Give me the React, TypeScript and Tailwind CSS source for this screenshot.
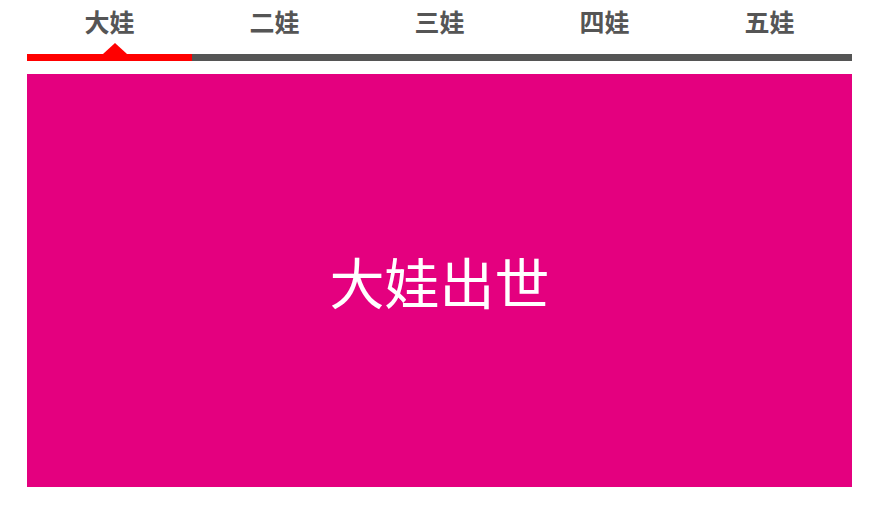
import React, { useState } from 'react';

const tabs = [
  { name: '大娃', text: '大娃出世', color: 'bg-[#e4007f]' },
  { name: '二娃', text: '二娃出世', color: 'bg-[#e4007f]' },
  { name: '三娃', text: '三娃出世', color: 'bg-[#e4007f]' },
  { name: '四娃', text: '四娃出世', color: 'bg-[#e4007f]' },
  { name: '五娃', text: '五娃出世', color: 'bg-[#e4007f]' },
];

const App = () => {
  const [active, setActive] = useState(0);

  return (
    <div className="w-[888px] h-[510px] bg-white font-['Noto_Sans_CJK_SC',sans-serif]">
      <div className="ml-[27px] w-[825px]">
        {/* Tabs */}
        <div className="flex h-[54px]">
          {tabs.map((tab, i) => (
            <div
              key={tab.name}
              onClick={() => setActive(i)}
              className="relative flex-1 flex justify-center pt-[3px] cursor-pointer"
            >
              <span className="text-[25px] leading-[36px] font-bold text-[#555555]">{tab.name}</span>
              {active === i && (
                <span className="absolute bottom-0 left-[76px] w-0 h-0 border-l-[12px] border-r-[12px] border-b-[11px] border-l-transparent border-r-transparent border-b-[#ff0000]" />
              )}
            </div>
          ))}
        </div>
        {/* Bar */}
        <div className="flex h-[7px] bg-[#555555]">
          {tabs.map((tab, i) => (
            <div key={tab.name} className={`flex-1 ${active === i ? 'bg-[#ff0000]' : ''}`} />
          ))}
        </div>
        {/* Panel */}
        <div className={`mt-[13px] h-[413px] ${tabs[active].color} flex items-center justify-center`}>
          <span className="text-[55px] leading-none text-white">{tabs[active].text}</span>
        </div>
      </div>
    </div>
  );
};

export default App;
